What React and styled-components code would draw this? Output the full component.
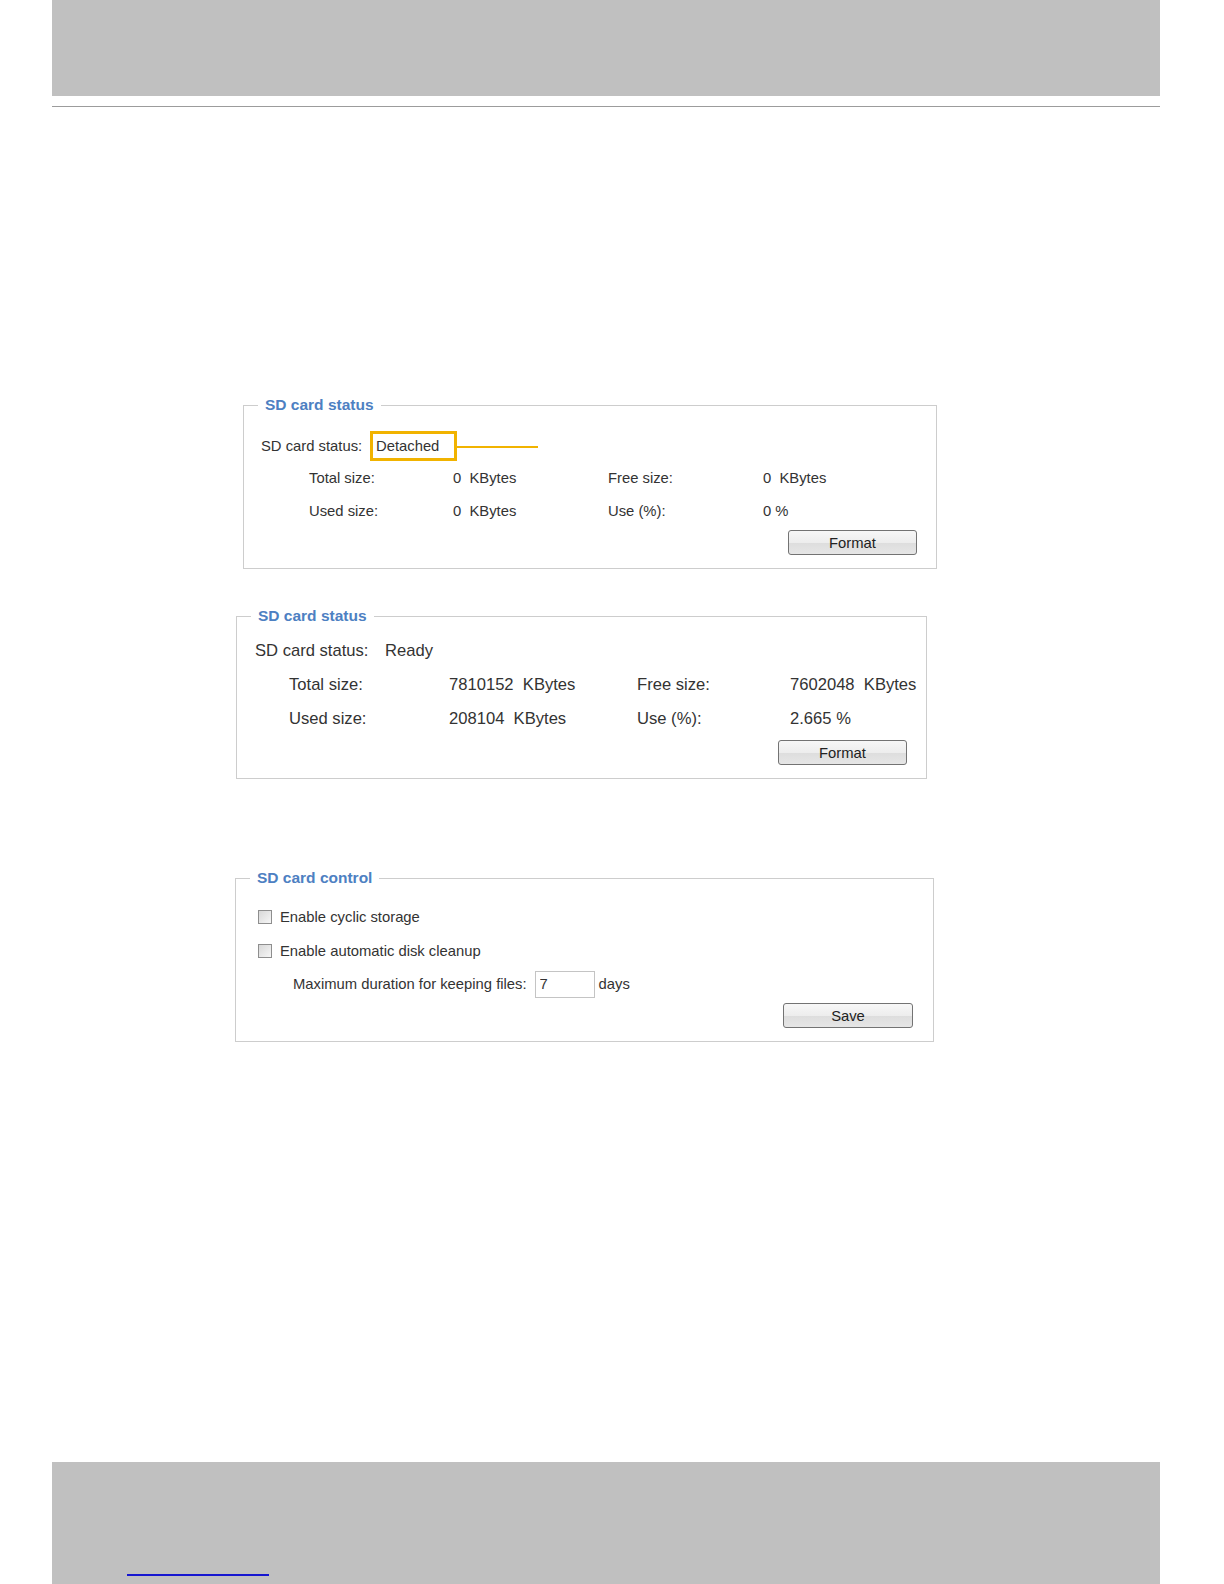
import React from 'react';
import styled, { createGlobalStyle } from 'styled-components';

const Global = createGlobalStyle`
  html, body { margin: 0; padding: 0; background: #fff; overflow: hidden; }
  body { font-family: "Liberation Sans", Arial, sans-serif; color: #333; }
`;

const Page = styled.div`
  width: 1224px;
  height: 1584px;
  display: flex;
  flex-direction: column;
  overflow: hidden;
`;

const Header = styled.header`
  margin-left: 52px;
  width: 1108px;
  height: 96px;
  background: #c0c0c0;
  flex: none;
`;

const Rule = styled.div`
  margin: 10px 0 0 52px;
  width: 1108px;
  height: 1px;
  background: #9c9c9c;
  flex: none;
`;

const Main = styled.main`
  display: flex;
  flex-direction: column;
  padding-top: 290px;
`;

const Panel = styled.fieldset`
  box-sizing: border-box;
  margin: ${p => p.$mt}px 0 0 ${p => p.$left}px;
  width: ${p => p.$width}px;
  min-inline-size: auto;
  border: 1px solid #cdcdcd;
  padding: ${p => p.$pt}px ${p => p.$pr}px 13px 0;
  font-size: ${p => p.$fs}px;
  color: #333;
`;

const Legend = styled.legend`
  margin-left: 14px;
  padding: 0 7px;
  font-size: 15.5px;
  line-height: 16px;
  font-weight: bold;
  color: #4d80c2;
`;

const StatusRow = styled.div`
  display: flex;
  align-items: center;
  height: ${p => p.$h}px;
  padding-left: ${p => p.$pl}px;
`;

const StatusLabel = styled.span`
  width: ${p => p.$w}px;
  flex: none;
`;

const Highlight = styled.span`
  box-sizing: border-box;
  display: flex;
  align-items: center;
  width: 87px;
  height: 30px;
  padding-left: 3px;
  border: 3px solid #f1b300;
`;

const Leader = styled.span`
  width: 81px;
  height: 2px;
  margin-top: 2px;
  background: #f1b300;
`;

const Stats = styled.div`
  display: grid;
  grid-template-columns: ${p => p.$cols};
  grid-template-rows: ${p => p.$rows};
  align-items: center;
  padding-left: ${p => p.$pl}px;
  white-space: pre;
`;

const ButtonRow = styled.div`
  display: flex;
  justify-content: flex-end;
  margin-top: ${p => p.$mt}px;
`;

const Button = styled.button`
  box-sizing: border-box;
  width: ${p => p.$w}px;
  height: 25px;
  padding: 0;
  border: 1px solid #737373;
  border-radius: 3px;
  background: linear-gradient(#f7f7f7 0%, #ededed 50%, #dddddd 51%, #e6e6e6 100%);
  font-family: "Liberation Sans", Arial, sans-serif;
  font-size: 14.8px;
  color: #222;
`;

const CheckRow = styled.label`
  display: flex;
  align-items: center;
  height: ${p => p.$h}px;
  padding-left: 22px;
`;

const Check = styled.input.attrs({ type: 'checkbox' })`
  appearance: none;
  box-sizing: border-box;
  width: 14px;
  height: 14px;
  margin: 0 8px 0 0;
  border: 1px solid #8e8e8e;
  background: linear-gradient(135deg, #d8d8d8, #f6f6f6);
`;

const FieldRow = styled.div`
  display: flex;
  align-items: center;
  height: 34px;
  padding-left: 57px;
`;

const NumberInput = styled.input`
  box-sizing: border-box;
  width: 60px;
  height: 27px;
  margin: 0 4px 0 8px;
  padding: 0 4px;
  border: 1px solid #c4c4c4;
  font-family: "Liberation Sans", Arial, sans-serif;
  font-size: 14.8px;
  color: #333;
`;

const Footer = styled.footer`
  box-sizing: border-box;
  margin: auto 0 0 52px;
  width: 1108px;
  height: 122px;
  flex: none;
  padding: 112px 0 0 75px;
  background: #c0c0c0;
`;

const FooterLink = styled.a`
  display: block;
  width: 142px;
  height: 2px;
  background: #1616d0;
`;

export default function App() {
  return (
    <Page>
      <Global />
      <Header />
      <Rule />
      <Main>
        <Panel $mt={0} $left={243} $width={694} $pt={18} $pr={19} $fs={14.8}>
          <Legend>SD card status</Legend>
          <StatusRow $h={30} $pl={17}>
            <StatusLabel $w={109}>SD card status:</StatusLabel>
            <Highlight>Detached</Highlight>
            <Leader />
          </StatusRow>
          <Stats $pl={65} $cols="144px 155px 155px auto" $rows="33px 34px">
            <span>Total size:</span>
            <span>0  KBytes</span>
            <span>Free size:</span>
            <span>0  KBytes</span>
            <span>Used size:</span>
            <span>0  KBytes</span>
            <span>Use (%):</span>
            <span>0 %</span>
          </Stats>
          <ButtonRow $mt={2}>
            <Button $w={129}>Format</Button>
          </ButtonRow>
        </Panel>

        <Panel $mt={39} $left={236} $width={691} $pt={10} $pr={19} $fs={16.6}>
          <Legend>SD card status</Legend>
          <StatusRow $h={34} $pl={18}>
            <StatusLabel $w={130}>SD card status:</StatusLabel>
            <span>Ready</span>
          </StatusRow>
          <Stats $pl={52} $cols="160px 188px 153px auto" $rows="34px 34px">
            <span>Total size:</span>
            <span>7810152  KBytes</span>
            <span>Free size:</span>
            <span>7602048  KBytes</span>
            <span>Used size:</span>
            <span>208104  KBytes</span>
            <span>Use (%):</span>
            <span>2.665 %</span>
          </Stats>
          <ButtonRow $mt={4}>
            <Button $w={129}>Format</Button>
          </ButtonRow>
        </Panel>

        <Panel $mt={91} $left={235} $width={699} $pt={14} $pr={20} $fs={14.8}>
          <Legend>SD card control</Legend>
          <CheckRow $h={34}>
            <Check />
            Enable cyclic storage
          </CheckRow>
          <CheckRow $h={33}>
            <Check />
            Enable automatic disk cleanup
          </CheckRow>
          <FieldRow>
            <span>Maximum duration for keeping files:</span>
            <NumberInput defaultValue="7" />
            <span>days</span>
          </FieldRow>
          <ButtonRow $mt={2}>
            <Button $w={130}>Save</Button>
          </ButtonRow>
        </Panel>
      </Main>
      <Footer>
        <FooterLink href="#" aria-label="link" />
      </Footer>
    </Page>
  );
}
